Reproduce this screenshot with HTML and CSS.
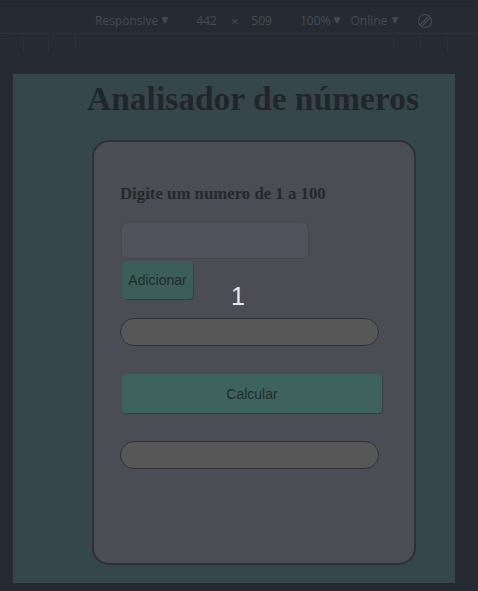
FILE: index.html
```html
<!DOCTYPE html>
<html lang="pt">
<head>
<meta charset="utf-8">
<title>Analisador de números</title>
<link rel="stylesheet" href="styles.css">
</head>
<body>
<div class="toolbar">
  <span class="tb-item tb-device">Responsive <span class="caret">▼</span></span>
  <span class="tb-item tb-w">442</span>
  <span class="tb-item tb-x">×</span>
  <span class="tb-item tb-h">509</span>
  <span class="tb-item tb-zoom">100% <span class="caret">▼</span></span>
  <span class="tb-item tb-net">Online <span class="caret caret-wide">▼</span></span>
  <svg class="tb-rotate" width="16" height="16" viewBox="0 0 16 16"><circle cx="8" cy="8" r="6.5" fill="none" stroke="#464a52" stroke-width="1.2"/><path d="M3.5 11.5 L11.5 3.5 M5 13 L13 5" stroke="#464a52" stroke-width="1.2"/></svg>
</div>
<div class="ruler">
  <div class="ruler-left"><span></span><span></span><span></span></div>
  <div class="ruler-right"><span></span><span></span><span></span></div>
</div>
<div class="viewport">
  <h1 class="title">Analisador de números</h1>
  <div class="card">
    <p class="label">Digite um numero de 1 a 100</p>
    <input class="num-input" type="text">
    <div class="add-row">
      <button class="btn btn-add">Adicionar</button>
      <span class="count">1</span>
    </div>
    <div class="pill"></div>
    <button class="btn btn-calc">Calcular</button>
    <div class="pill pill-result"></div>
  </div>
</div>
</body>
</html>
```

FILE: styles.css
```css
* { box-sizing: border-box; }
html, body { margin: 0; padding: 0; }
body {
  background: #262a33;
  width: 478px;
  height: 591px;
  overflow: hidden;
  font-family: "Liberation Sans", Arial, sans-serif;
}
.toolbar {
  height: 34px;
  border-bottom: 1px dotted #363a43;
  position: relative;
  display: flex;
  align-items: center;
  padding-top: 8px;
  font-family: "Open Sans", "DejaVu Sans", sans-serif;
  font-size: 12px;
  color: #464a52;
  padding-left: 95px;
}
.toolbar::before {
  content: "";
  position: absolute;
  left: 0; right: 0; top: 6px;
  border-top: 1px solid #22252c;
}
.tb-item { white-space: nowrap; }
.caret { font-size: 9px; position: relative; top: -2px; }
.caret-wide { margin-left: 1px; }
.tb-w { margin-left: 28px; }
.tb-x { margin-left: 14px; font-size: 13px; }
.tb-h { margin-left: 13px; }
.tb-zoom { margin-left: 28px; }
.tb-net { margin-left: 10px; }
.tb-rotate { margin-left: 19px; }
.ruler {
  height: 19px;
  display: flex;
  justify-content: space-between;
}
.ruler-left, .ruler-right { display: flex; }
.ruler span {
  width: 1px;
  background: #2c3039;
  height: 19px;
}
.ruler-left { padding-left: 23px; gap: 24px; }
.ruler-left span:nth-child(3) { margin-left: 2px; }
.ruler-right { padding-right: 30px; gap: 26px; }
.viewport {
  margin: 21px 0 0 13px;
  width: 442px;
  height: 509px;
  background: #35474b;
  padding-top: 1px;
}
.title {
  font-family: "Liberation Serif", "Times New Roman", serif;
  font-weight: bold;
  font-size: 33.5px;
  line-height: 36px;
  color: #22262b;
  margin: 6px 0 0 74px;
}
.card {
  margin: 23px 0 0 79px;
  width: 324px;
  height: 425px;
  background: #4a4d53;
  border: 2px solid #2e3136;
  border-radius: 17px;
  padding: 42px 0 0 26px;
}
.label {
  margin: 0;
  font-family: "Liberation Serif", "Times New Roman", serif;
  font-weight: bold;
  font-size: 16.8px;
  line-height: 20px;
  color: #25282d;
}
.num-input {
  display: block;
  margin: 18px 0 0 1px;
  width: 188px;
  height: 37px;
  background: #50535c;
  border: 1px solid #44474e;
  border-radius: 6px;
  outline: none;
}
.add-row {
  display: flex;
  align-items: flex-end;
  margin-top: 2px;
}
.btn {
  font-family: "Liberation Sans", Arial, sans-serif;
  font-size: 14px;
  border: none;
  background: #3c5e59;
  color: #222b2a;
  cursor: pointer;
}
.btn-add {
  margin-left: 2px;
  width: 71px;
  height: 38px;
  border-radius: 4px;
  padding: 0;
  box-shadow: 1px 1px 0 #3a3d42;
}
.count {
  margin-left: 38px;
  font-family: "Liberation Sans", Arial, sans-serif;
  font-size: 25px;
  line-height: 25px;
  color: #e6e8ec;
  position: relative;
  top: 10px;
}
.pill {
  width: 259px;
  height: 28px;
  margin-top: 19px;
  background: #585758;
  border: 1px solid #303237;
  border-radius: 14px;
}
.btn-calc {
  display: block;
  margin: 28px 0 0 2px;
  width: 260px;
  height: 39px;
  border-radius: 4px;
  background: #3e635d;
  box-shadow: 1px 1px 0 #3a3d42;
}
.pill-result { margin-top: 28px; }
```
